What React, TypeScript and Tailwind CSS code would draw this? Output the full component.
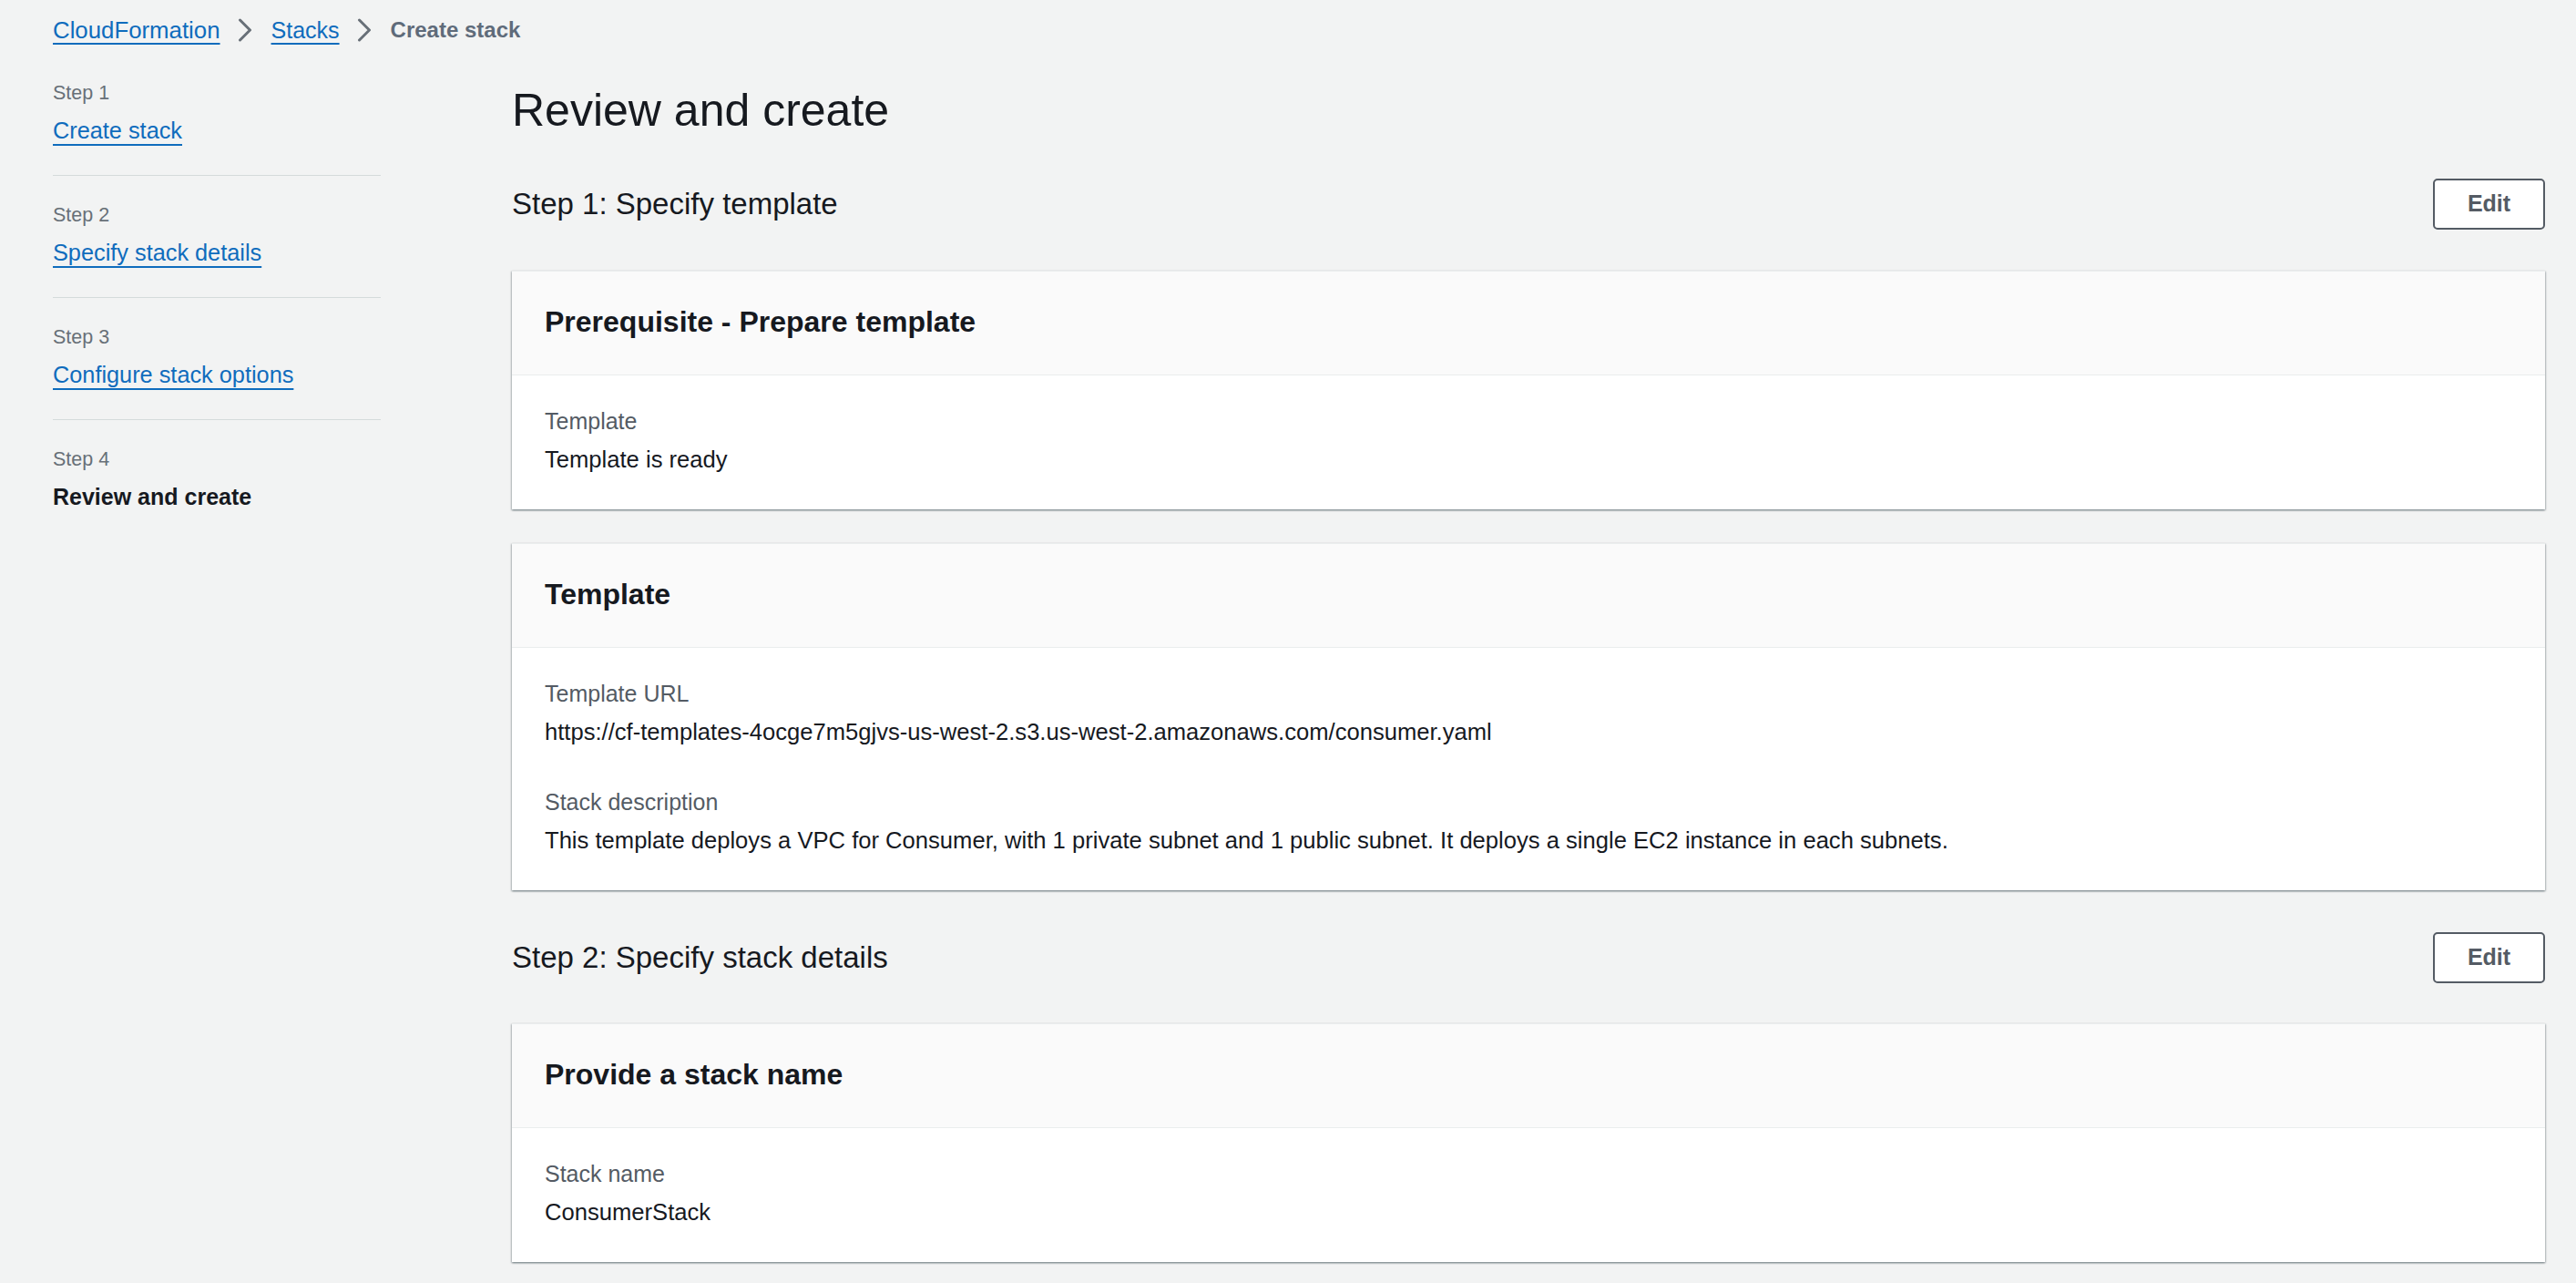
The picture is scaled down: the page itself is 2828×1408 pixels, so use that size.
import type { ReactNode } from 'react';

type Step = { label: string; title: string; current?: boolean };

const steps: Step[] = [
  { label: 'Step 1', title: 'Create stack' },
  { label: 'Step 2', title: 'Specify stack details' },
  { label: 'Step 3', title: 'Configure stack options' },
  { label: 'Step 4', title: 'Review and create', current: true },
];

function Chevron() {
  return (
    <svg width="16" height="26" viewBox="0 0 16 26" fill="none" className="shrink-0">
      <path d="M2.5 2 L13.5 13 L2.5 24" stroke="#687078" strokeWidth="3" strokeLinecap="round" strokeLinejoin="round" />
    </svg>
  );
}

function Breadcrumbs() {
  return (
    <nav className="flex items-center pt-[15px] text-[25.8px] leading-[36px]">
      <a className="text-[#0f6cbd] underline decoration-2 underline-offset-[5px]">CloudFormation</a>
      <span className="ml-[19px] mr-[21px] flex items-center"><Chevron /></span>
      <a className="text-[25px] text-[#0f6cbd] underline decoration-2 underline-offset-[5px]">Stacks</a>
      <span className="ml-[19px] mr-[21px] flex items-center"><Chevron /></span>
      <span className="text-[24px] font-bold text-[#5f6b7a]">Create stack</span>
    </nav>
  );
}

function WizardSteps() {
  return (
    <ul className="w-[360px] shrink-0 pt-[35px]">
      {steps.map((step, i) => (
        <li
          key={step.label}
          className={`${i === 0 ? '' : 'pt-[27px]'} ${i === steps.length - 1 ? '' : 'border-b border-[#d5dbdb] pb-[31px]'}`}
        >
          <p className="text-[21.5px] leading-[32px] text-[#687078]">{step.label}</p>
          {step.current ? (
            <p className="mt-[7px] text-[25px] font-bold leading-[36px] text-[#16191f]">{step.title}</p>
          ) : (
            <a className="mt-[7px] inline-block text-[25.3px] leading-[36px] text-[#0f6cbd] underline decoration-2 underline-offset-[6px]">
              {step.title}
            </a>
          )}
        </li>
      ))}
    </ul>
  );
}

function SectionHeader({ title }: { title: string }) {
  return (
    <div className="flex items-center justify-between">
      <h2 className="text-[33px] leading-[44px] text-[#16191f]">{title}</h2>
      <button className="flex h-[56px] w-[123px] items-center justify-center rounded-[5px] border-2 border-[#545b64] bg-white text-[25px] font-bold text-[#545b64]">
        Edit
      </button>
    </div>
  );
}

function Card({ title, children }: { title: string; children: ReactNode }) {
  return (
    <section className="border-t border-[#eaeded] bg-white shadow-[0_1px_2px_0_rgba(0,28,36,0.4),1px_1px_2px_0_rgba(0,28,36,0.15),-1px_1px_2px_0_rgba(0,28,36,0.15)]">
      <div className="border-b border-[#eaeded] bg-[#fafafa] px-[36px] pt-[35px] pb-[38px]">
        <h3 className="text-[32px] font-bold leading-[40px] text-[#16191f]">{title}</h3>
      </div>
      <div className="flex flex-col gap-[41px] px-[36px] pt-[32px] pb-[37px]">{children}</div>
    </section>
  );
}

function KeyValue({ label, value }: { label: string; value: string }) {
  return (
    <div>
      <p className="text-[25px] leading-[36px] text-[#545b64]">{label}</p>
      <p className="mt-[6px] text-[25.6px] leading-[36px] text-[#16191f]">{value}</p>
    </div>
  );
}

export default function App() {
  return (
    <div className="min-h-screen bg-[#f2f3f3] pl-[58px] pr-[34px] font-['Liberation_Sans',Arial,sans-serif] text-[#16191f]">
      <Breadcrumbs />
      <div className="flex gap-[144px]">
        <WizardSteps />
        <main className="min-w-0 flex-1 pt-[38px]">
          <h1 className="text-[50px] leading-[65px] text-[#16191f]">Review and create</h1>

          <div className="mt-[42px]">
            <SectionHeader title="Step 1: Specify template" />
          </div>
          <div className="mt-[45px] flex flex-col gap-[37px]">
            <Card title="Prerequisite - Prepare template">
              <KeyValue label="Template" value="Template is ready" />
            </Card>
            <Card title="Template">
              <KeyValue
                label="Template URL"
                value="https://cf-templates-4ocge7m5gjvs-us-west-2.s3.us-west-2.amazonaws.com/consumer.yaml"
              />
              <KeyValue
                label="Stack description"
                value="This template deploys a VPC for Consumer, with 1 private subnet and 1 public subnet. It deploys a single EC2 instance in each subnets."
              />
            </Card>
          </div>

          <div className="mt-[46px]">
            <SectionHeader title="Step 2: Specify stack details" />
          </div>
          <div className="mt-[44px] pb-[40px]">
            <Card title="Provide a stack name">
              <KeyValue label="Stack name" value="ConsumerStack" />
            </Card>
          </div>
        </main>
      </div>
    </div>
  );
}
